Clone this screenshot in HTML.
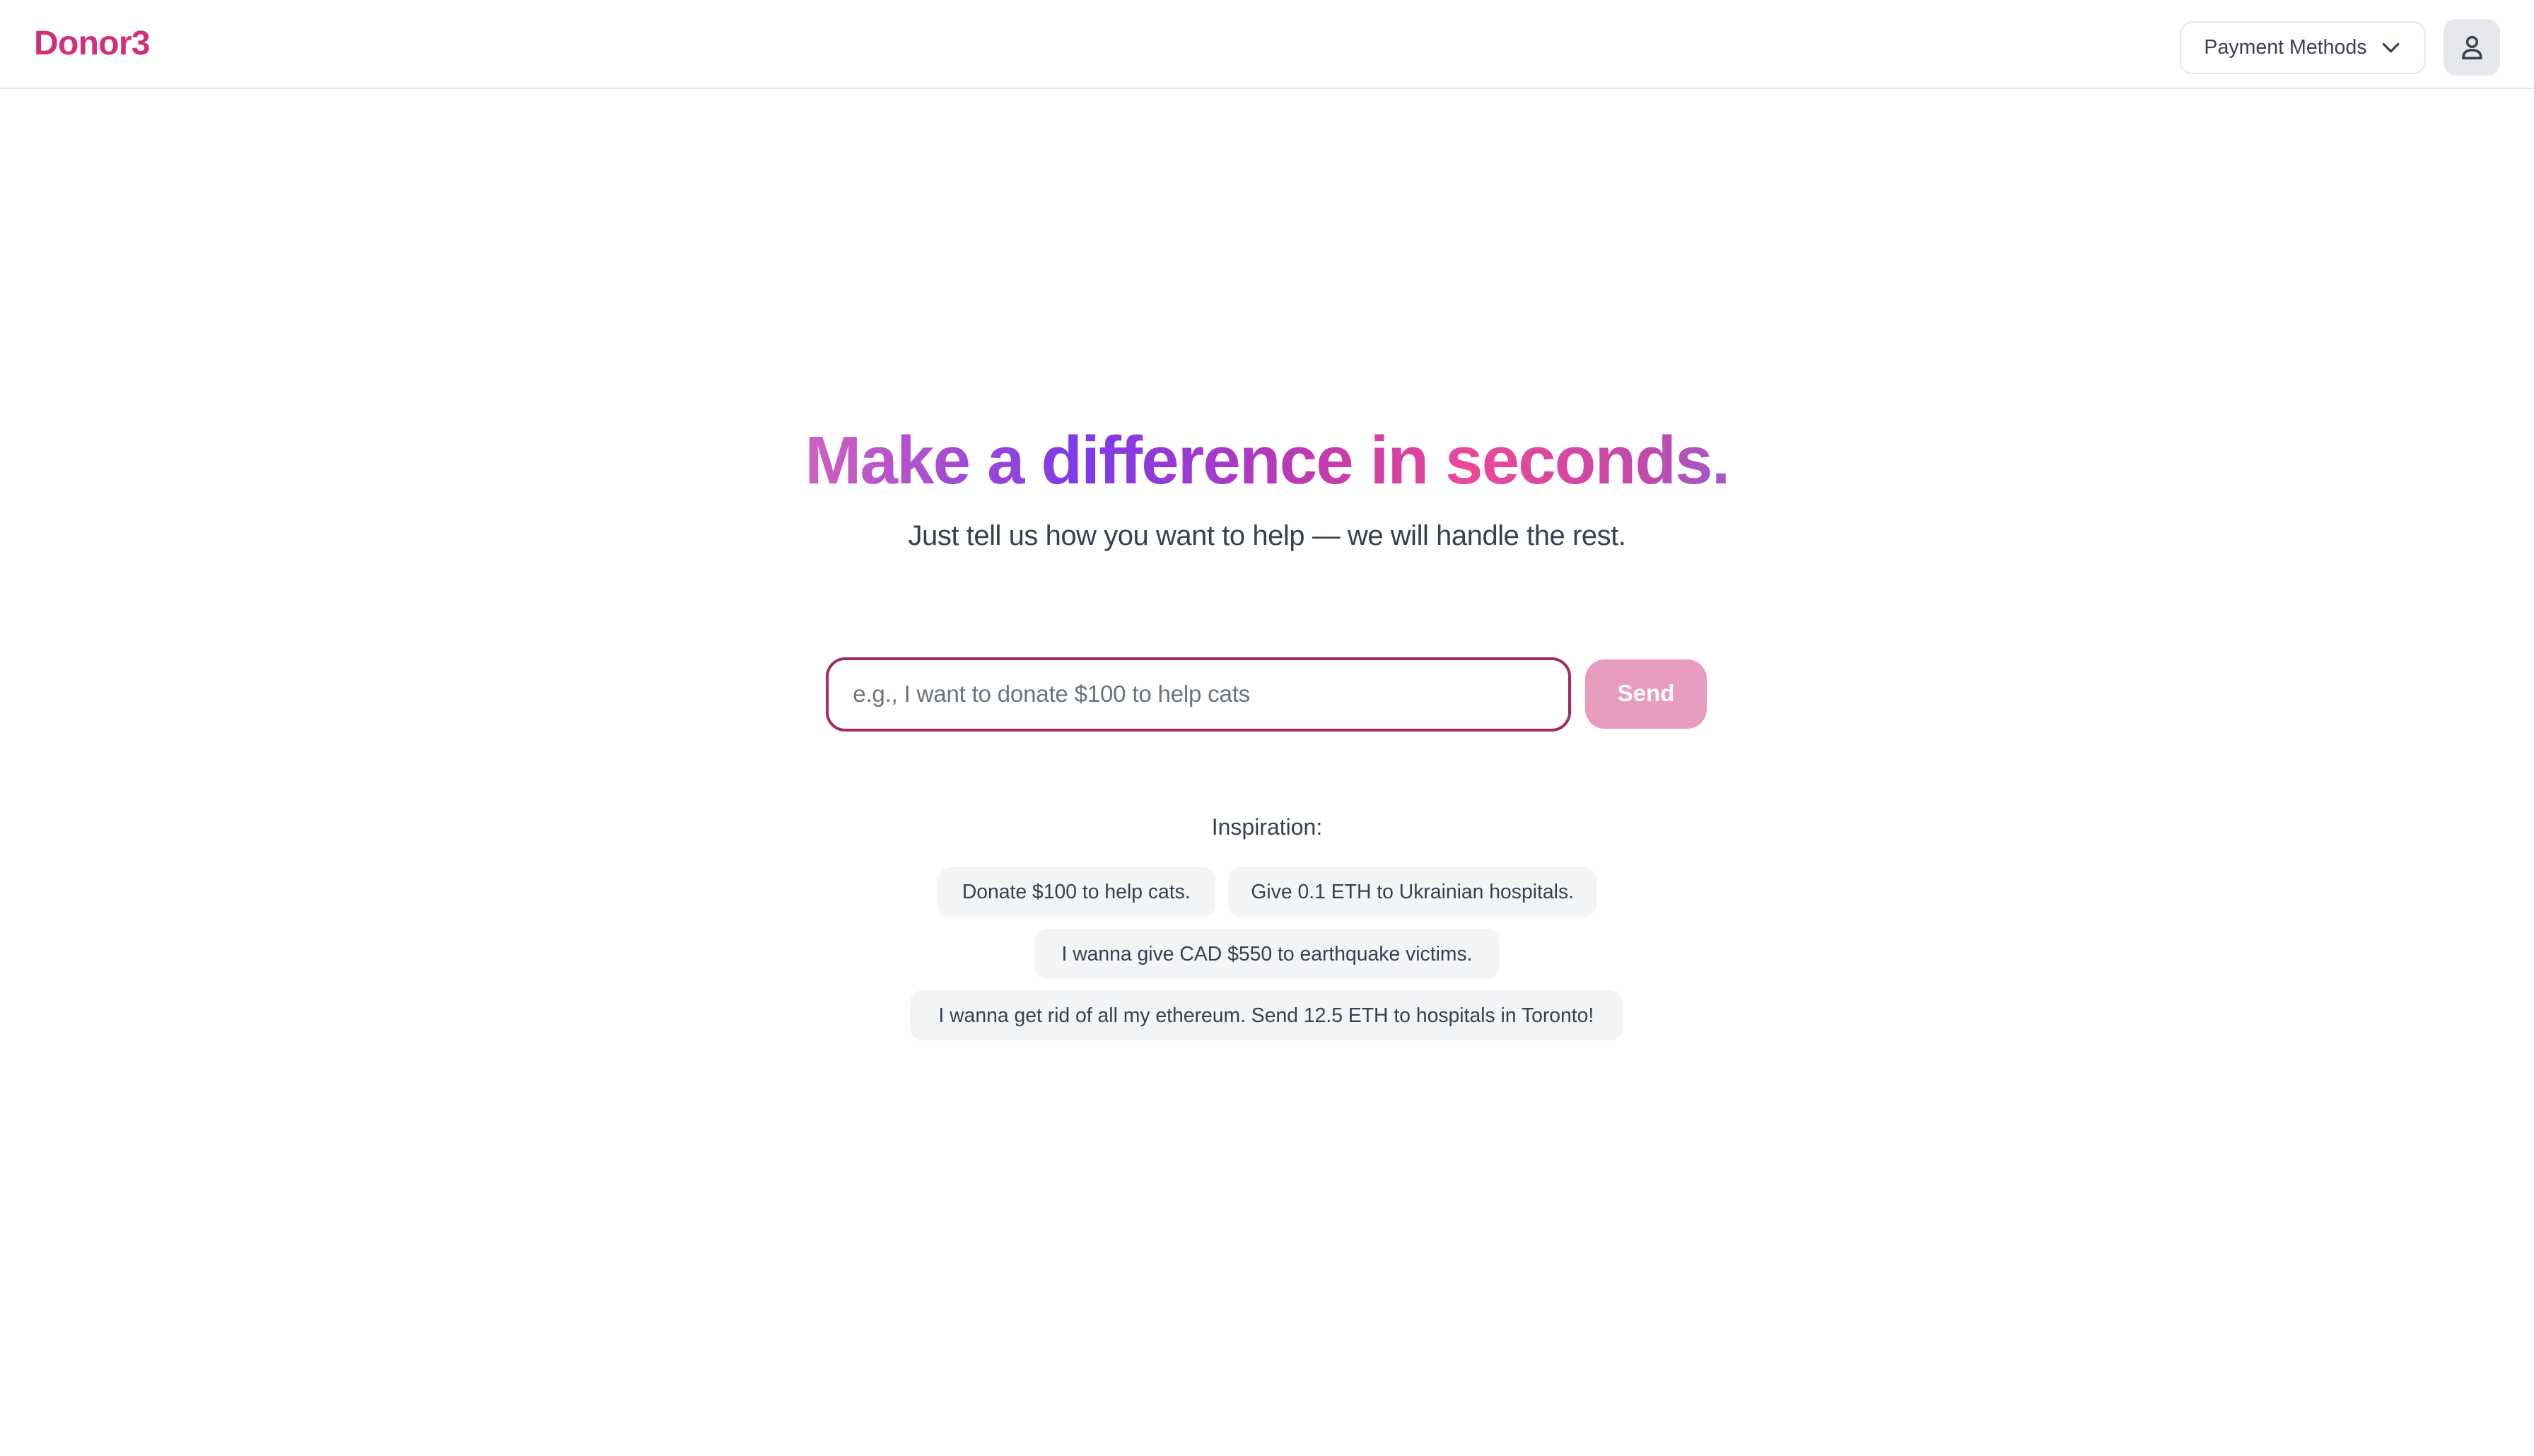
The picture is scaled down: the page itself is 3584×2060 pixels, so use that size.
<!DOCTYPE html>
<html><head><meta charset="utf-8"><style>
html{zoom:2.2857}
*{box-sizing:border-box;margin:0;padding:0}
body{width:1568px;height:901px;background:#fff;font-family:"Liberation Sans",Arial,sans-serif;position:relative;overflow:hidden}
.hdr{position:absolute;left:0;top:0;width:1568px;height:55px;border-bottom:1px solid #e5e7eb}
.logo{position:absolute;left:21px;top:15px;font-size:21px;font-weight:bold;color:#d12f7b;letter-spacing:-0.3px}
.pm{position:absolute;left:1349px;top:13px;width:152px;height:33px;border:1px solid #e5e7eb;border-radius:8px;font-size:12.5px;color:#374151;padding-left:14px;line-height:31px}
.pm svg{position:absolute;right:15px;top:12px}
.ub{position:absolute;left:1512px;top:12px;width:35px;height:35px;background:#e5e7eb;border-radius:8px}
.ub svg{position:absolute;left:9px;top:9px}
h1{position:absolute;left:0;width:1568px;top:261px;text-align:center;font-size:42px;font-weight:bold;letter-spacing:-0.8px;line-height:48px}
h1 span{background:linear-gradient(90deg,#d061bf 0%,#8b3fe0 25%,#7c3aed 30%,#c13ab0 55%,#ec4899 72%,#c548a9 90%,#9f5cc8 100%);-webkit-background-clip:text;background-clip:text;color:transparent}
.sub{position:absolute;left:0;width:1568px;top:322px;text-align:center;font-size:17.5px;color:#374151;letter-spacing:-0.2px}
.inp{position:absolute;left:511px;top:407px;width:461px;height:46px;border:2px solid #a52a63;border-radius:12px;font-size:14.5px;color:#6b7280;padding-left:15px;line-height:43px;letter-spacing:-0.1px}
.send{position:absolute;left:981px;top:408px;width:75px;height:43px;background:#e89cbf;border-radius:12px;color:#fff;font-weight:bold;font-size:14.5px;text-align:center;line-height:43px}
.insp{position:absolute;left:0;width:1568px;top:504px;text-align:center;font-size:14px;color:#374151}
.chip{position:absolute;height:31px;background:#f3f4f6;border-radius:8px;font-size:12.4px;color:#374151;text-align:center;line-height:31px;white-space:nowrap}
</style></head><body>
<div class="hdr">
<div class="logo">Donor3</div>
<div class="pm">Payment Methods<svg width="11" height="8" viewBox="0 0 11 8"><path d="M1 1.5 L5.5 6 L10 1.5" fill="none" stroke="#374151" stroke-width="1.4" stroke-linecap="round" stroke-linejoin="round"/></svg></div>
<div class="ub"><svg width="17" height="17" viewBox="0 0 17 17"><circle cx="8.5" cy="5" r="3" fill="none" stroke="#374151" stroke-width="1.5"/><path d="M3 15 Q3 10 8.5 10 Q14 10 14 15 Z" fill="none" stroke="#374151" stroke-width="1.5" stroke-linejoin="round"/></svg></div>
</div>
<h1><span>Make a difference in seconds.</span></h1>
<div class="sub">Just tell us how you want to help — we will handle the rest.</div>
<div class="inp">e.g., I want to donate $100 to help cats</div>
<div class="send">Send</div>
<div class="insp">Inspiration:</div>
<div class="chip" style="left:580px;top:537px;width:172px">Donate $100 to help cats.</div>
<div class="chip" style="left:760px;top:537px;width:228px">Give 0.1 ETH to Ukrainian hospitals.</div>
<div class="chip" style="left:640px;top:575px;width:288px;line-height:32px">I wanna give CAD $550 to earthquake victims.</div>
<div class="chip" style="left:563px;top:613px;width:441px;line-height:32px">I wanna get rid of all my ethereum. Send 12.5 ETH to hospitals in Toronto!</div>
</body></html>
